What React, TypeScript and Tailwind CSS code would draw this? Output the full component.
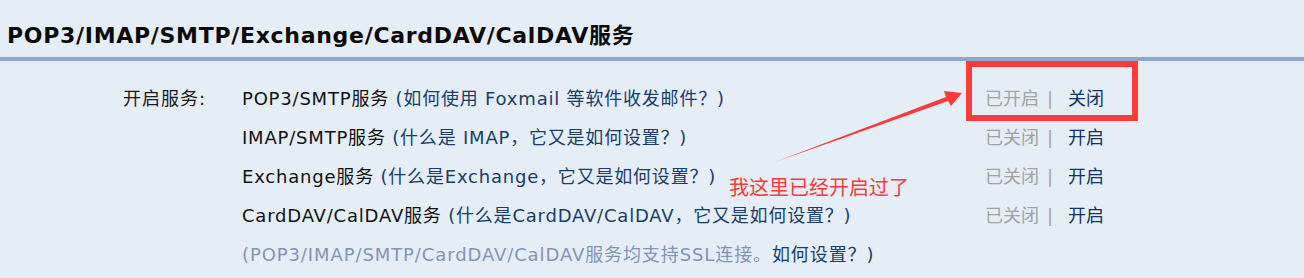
import React from "react";

const latin = '"DejaVu Sans", "Noto Sans CJK SC", sans-serif';

type Row = { name: string; help: string; on: boolean };

const rows: Row[] = [
  { name: "POP3/SMTP服务", help: "(如何使用 Foxmail 等软件收发邮件？)", on: true },
  { name: "IMAP/SMTP服务", help: "(什么是 IMAP，它又是如何设置？)", on: false },
  { name: "Exchange服务", help: "(什么是Exchange，它又是如何设置？)", on: false },
  { name: "CardDAV/CalDAV服务", help: "(什么是CardDAV/CalDAV，它又是如何设置？)", on: false },
];

export default function App() {
  return (
    <div
      className="relative w-[1304px] h-[278px] overflow-hidden bg-[#e5edf6] text-black"
      style={{ fontFamily: latin }}
    >
      <div className="h-[57px] pl-[7px] pt-[22px] text-[22px] font-bold leading-[28px] tracking-[0.7px] text-[#0b0b0b]">
        POP3/IMAP/SMTP/Exchange/CardDAV/CalDAV服务
      </div>
      <div className="h-[4px] bg-[#8ea8cc]" />
      <div className="flex pl-[123px] pt-[18px] text-[18px]">
        <div className="w-[119px] h-[39px] leading-[39px] tracking-[1px] text-[#1a1a1a]">开启服务:</div>
        <div className="flex flex-col">
          {rows.map((r) => (
            <div key={r.name} className="flex h-[39px] items-center">
              <div className="w-[743px] whitespace-nowrap tracking-[0.8px]">
                <span className="text-[#111]">{r.name} </span>
                <span className="text-[#1a3d66]">{r.help}</span>
              </div>
              <div className="flex items-center whitespace-nowrap">
                <span className="text-[#a3a3a3]">{r.on ? "已开启" : "已关闭"}</span>
                <span className="ml-[8px] text-[#a3a3a3]">|</span>
                <span className="ml-[15px] text-[#0e3563]">{r.on ? "关闭" : "开启"}</span>
              </div>
            </div>
          ))}
          <div className="flex h-[39px] items-center whitespace-nowrap tracking-[0.9px]">
            <span className="text-[#8495b3]">(POP3/IMAP/SMTP/CardDAV/CalDAV服务均支持SSL连接。</span>
            <span className="text-[#1a3d66]">如何设置？)</span>
          </div>
        </div>
      </div>

      {/* annotation overlay */}
      <div className="absolute left-[966px] top-[61px] w-[172px] h-[60px] border-[6px] border-[#fd3a3a]" />
      <svg className="absolute left-0 top-0" width="1304" height="278">
        <polygon points="775,162 946,97 944,91 962,93 951,106 948,101" fill="#fd3a3a" />
      </svg>
      <div
        className="absolute left-[729px] top-[173px] text-[20px] leading-[28px] text-[#fd3a3a]"
        style={{ fontFamily: '"Noto Sans CJK SC", sans-serif' }}
      >
        我这里已经开启过了
      </div>
    </div>
  );
}
